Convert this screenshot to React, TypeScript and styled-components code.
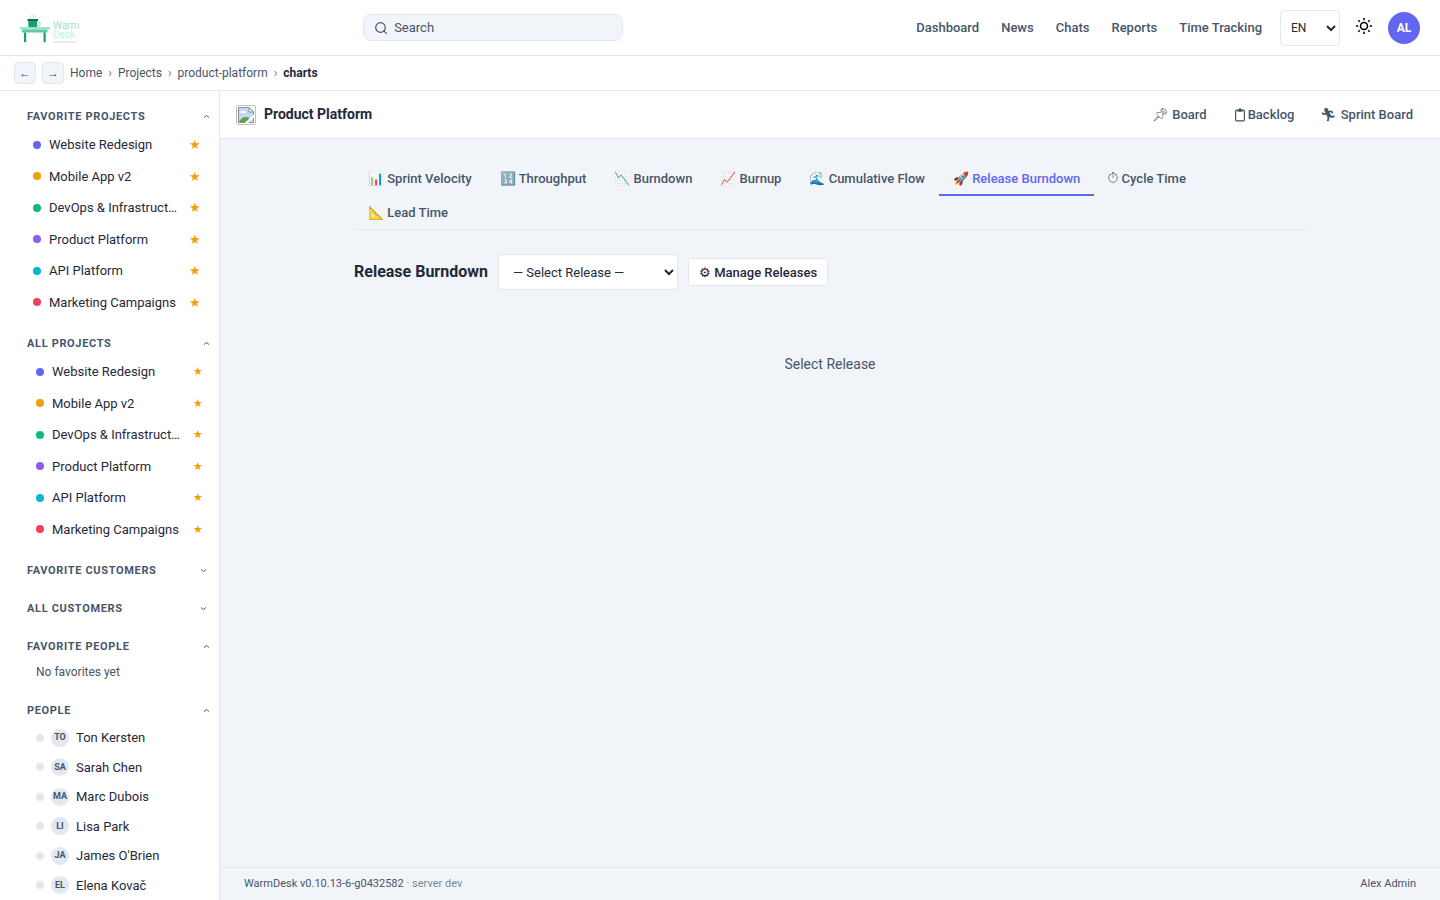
import React from 'react';
import styled, { createGlobalStyle } from 'styled-components';

const c = {
  bg: '#f1f5f9',
  surface: '#ffffff',
  border: '#e2e8f0',
  text: '#1e293b',
  muted: '#475569',
  primary: '#6366f1',
  star: '#f59e0b',
};

const Global = createGlobalStyle`
  *, *::before, *::after { box-sizing: border-box; }
  body {
    margin: 0;
    font-family: Roboto, 'Liberation Sans', sans-serif;
    font-size: 14px;
    line-height: 1.5;
    color: ${c.text};
    background: ${c.bg};
  }
  button, select, input { font-family: inherit; }
  a { color: inherit; text-decoration: none; }
  ul { list-style: none; margin: 0; padding: 0; }
`;

const Page = styled.div`
  display: flex;
  flex-direction: column;
  height: 100vh;
`;

const TopBar = styled.header`
  display: flex;
  align-items: center;
  flex: none;
  height: 56px;
  padding: 0 20px;
  background: ${c.surface};
  border-bottom: 1px solid ${c.border};
`;

const LogoLink = styled.a`
  display: flex;
  width: 60px;
  height: 32px;
`;

const SearchArea = styled.div`
  flex: 1;
  display: flex;
  justify-content: center;
  padding-right: 10px;
`;

const SearchBox = styled.label`
  display: flex;
  align-items: center;
  gap: 7px;
  width: 260px;
  height: 27px;
  padding: 0 11px;
  color: ${c.muted};
  background: ${c.bg};
  border: 1px solid ${c.border};
  border-radius: 8px;
`;

const SearchInput = styled.input`
  flex: 1;
  min-width: 0;
  padding: 0;
  border: 0;
  outline: 0;
  background: transparent;
  color: ${c.text};
  font-size: 13px;
  &::placeholder { color: ${c.muted}; opacity: 1; }
`;

const TopNav = styled.nav`
  display: flex;
  gap: 22px;
  margin-right: 18px;
  font-size: 13px;
  font-weight: 500;
  color: ${c.muted};
`;

const Select = styled.select<{ $width: number; $size: number }>`
  width: ${p => p.$width}px;
  height: 36px;
  padding: 0 0 0 ${p => (p.$size === 12 ? 6 : 10)}px;
  font-size: ${p => p.$size}px;
  color: ${c.text};
  background: ${c.surface};
  border: 1px solid ${c.border};
  border-radius: 4px;
`;

const ThemeButton = styled.button`
  display: flex;
  margin: 0 16px;
  padding: 0 0 4px;
  border: 0;
  background: none;
  color: #000;
`;

const UserBadge = styled.button`
  width: 32px;
  height: 32px;
  padding: 0;
  border: 0;
  border-radius: 50%;
  background: ${c.primary};
  color: #fff;
  font-size: 12px;
  font-weight: 700;
`;

const CrumbBar = styled.nav`
  display: flex;
  align-items: center;
  flex: none;
  gap: 6px;
  height: 35px;
  padding: 0 14px;
  background: ${c.surface};
  border-bottom: 1px solid ${c.border};
  font-size: 12px;
  color: ${c.muted};
`;

const HistoryButton = styled.button`
  width: 22px;
  height: 22px;
  padding: 0;
  border: 1px solid ${c.border};
  border-radius: 4px;
  background: ${c.bg};
  color: ${c.muted};
  font-size: 12px;
  line-height: 20px;
`;

const Separator = styled.span`
  opacity: 0.8;
`;

const Current = styled.span`
  font-weight: 700;
  color: ${c.text};
`;

const Body = styled.div`
  display: flex;
  flex: 1;
  min-height: 0;
`;

const Sidebar = styled.aside`
  flex: none;
  width: 220px;
  padding-top: 16px;
  overflow: hidden;
  background: ${c.surface};
  border-right: 1px solid ${c.border};
`;

const Section = styled.section<{ $gap: number }>`
  margin-bottom: ${p => p.$gap}px;
`;

const SectionToggle = styled.button<{ $open: boolean }>`
  display: flex;
  justify-content: space-between;
  align-items: center;
  width: 100%;
  height: 18px;
  padding: 0 ${p => (p.$open ? 9 : 12)}px 0 27px;
  border: 0;
  background: none;
  color: ${c.muted};
  font-size: 11px;
  font-weight: 700;
  letter-spacing: 0.06em;
  text-transform: uppercase;
`;

const List = styled.ul`
  padding-top: 4px;
`;

const ProjectLink = styled.a<{ $inset: boolean }>`
  display: flex;
  align-items: center;
  gap: 8px;
  padding: 6px ${p => (p.$inset ? 16 : 18)}px 6px ${p => (p.$inset ? 36 : 33)}px;
  font-size: 13px;
`;

const Dot = styled.span<{ $color: string }>`
  flex: none;
  width: 8px;
  height: 8px;
  border-radius: 50%;
  background: ${p => p.$color};
`;

const ItemName = styled.span`
  flex: 1;
  overflow: hidden;
  white-space: nowrap;
  text-overflow: ellipsis;
`;

const Star = styled.span<{ $small: boolean }>`
  flex: none;
  padding-left: 4px;
  font-size: ${p => (p.$small ? 11 : 13)}px;
  line-height: 1;
  color: ${c.star};
`;

const EmptyNote = styled.p`
  margin: 0;
  padding: 8px 36px 0;
  font-size: 12px;
  color: ${c.muted};
`;

const PersonLink = styled.a`
  display: flex;
  align-items: center;
  gap: 7px;
  padding: 5px 16px 5px 36px;
  font-size: 13px;
`;

const Initials = styled.span`
  display: flex;
  align-items: center;
  justify-content: center;
  flex: none;
  width: 18px;
  height: 18px;
  border-radius: 50%;
  background: ${c.border};
  color: ${c.muted};
  font-size: 9px;
  font-weight: 700;
`;

const Content = styled.div`
  display: flex;
  flex-direction: column;
  flex: 1;
  min-width: 0;
`;

const ProjectBar = styled.div`
  display: flex;
  align-items: center;
  flex: none;
  gap: 8px;
  height: 48px;
  padding: 0 16px;
  background: ${c.surface};
  border-bottom: 1px solid ${c.border};
`;

const ProjectTitle = styled.span`
  flex: 1;
  font-weight: 700;
`;

const ProjectNav = styled.nav`
  display: flex;
  gap: 4px;
`;

const ProjectNavLink = styled.a`
  display: flex;
  align-items: center;
  padding: 4px 11px;
  font-size: 13px;
  font-weight: 500;
  color: ${c.muted};
`;

const Main = styled.main`
  flex: 1;
  width: 100%;
  max-width: 1000px;
  margin: 0 auto;
  padding: 24px;
`;

const Tabs = styled.div`
  display: flex;
  flex-wrap: wrap;
  row-gap: 2px;
  margin-bottom: 24px;
  border-bottom: 1px solid ${c.border};
`;

const Tab = styled.button<{ $active: boolean }>`
  padding: 8px 14px;
  border: 0;
  border-bottom: 2px solid ${p => (p.$active ? c.primary : 'transparent')};
  margin-bottom: -1px;
  background: none;
  color: ${p => (p.$active ? c.primary : c.muted)};
  font-size: 13px;
  font-weight: 500;
`;

const ChartHead = styled.div`
  display: flex;
  align-items: center;
  gap: 10px;
`;

const ChartTitle = styled.h2`
  margin: 0;
  font-size: 16px;
  font-weight: 700;
`;

const ManageButton = styled.button`
  height: 28px;
  padding: 0 10px;
  border: 1px solid ${c.border};
  border-radius: 4px;
  background: ${c.surface};
  color: ${c.text};
  font-size: 13px;
  font-weight: 500;
`;

const EmptyState = styled.p`
  margin: 0;
  padding: 64px 0;
  text-align: center;
  color: ${c.muted};
`;

const Footer = styled.footer`
  display: flex;
  justify-content: space-between;
  align-items: center;
  flex: none;
  height: 33px;
  padding: 0 24px;
  border-top: 1px solid ${c.border};
  font-size: 11px;
  color: ${c.muted};
`;

const Faded = styled.span`
  opacity: 0.7;
`;

const LogoText = styled.text`
  font-family: Roboto, sans-serif;
  font-size: 10px;
`;

function Logo() {
  return (
    <svg width="60" height="32" viewBox="0 0 60 32" role="img" aria-label="WarmDesk">
      <path d="M10.500 6V3M13 6V2M15.500 6V3" stroke="#c5ebdd" strokeWidth="1" fill="none" />
      <path d="M17.500 10.500h1.200a1.500 1.500 0 0 1 0 3.200H17.500" stroke="#8fd9bf" strokeWidth="1" fill="none" />
      <rect x="8.300" y="8" width="8.800" height="7.500" fill="#1d9e75" />
      <rect x="7.500" y="7" width="10.500" height="2" fill="#0f6e56" />
      <rect x="0" y="15" width="30" height="2.500" fill="#9fe1cb" />
      <rect x="2" y="17.500" width="25.500" height="3" fill="#5dcaa5" />
      <rect x="4" y="20.500" width="2.200" height="9.700" fill="#1d9e75" />
      <rect x="23.500" y="20.500" width="2.200" height="9.700" fill="#1d9e75" />
      <LogoText x="33" y="17" fill="#9fe1cb">Warm</LogoText>
      <LogoText x="33" y="26" fill="#b5fccf">Desk</LogoText>
      <path d="M33 30h24" stroke="#dedad6" strokeWidth="1" />
    </svg>
  );
}

function SearchIcon() {
  return (
    <svg width="12" height="12" viewBox="0 0 12 12" fill="none" stroke="currentColor" strokeWidth="1.200" strokeLinecap="round" aria-hidden="true">
      <circle cx="5.500" cy="5.500" r="4.800" />
      <path d="M9 9l2.300 2.300" />
    </svg>
  );
}

function SunIcon() {
  return (
    <svg width="16" height="16" viewBox="0 0 16 16" fill="none" stroke="currentColor" strokeWidth="1.500" aria-hidden="true">
      <circle cx="8" cy="8" r="3.500" />
      <path d="M8 0v2.200M8 13.800V16M0 8h2.200M13.800 8H16M2.300 2.300l1.500 1.500M12.200 12.200l1.500 1.500M2.300 13.700l1.500-1.500M12.200 3.800l1.500-1.500" />
    </svg>
  );
}

function ClipboardIcon() {
  return (
    <svg width="15" height="14" viewBox="0 0 15 14" fill="none" stroke="currentColor" strokeWidth="1.200" aria-hidden="true">
      <rect x="2.600" y="2.100" width="8.800" height="10.800" rx="1.200" />
      <path d="M4.500 1.500H5.800a1.200 1.200 0 0 1 2.400 0H9.500V3.800H4.500Z" fill="currentColor" stroke="none" />
    </svg>
  );
}

function StopwatchIcon() {
  return (
    <svg width="10" height="11" viewBox="0 0 10 11" fill="none" stroke="currentColor" strokeWidth="0.700" aria-hidden="true">
      <circle cx="5" cy="6" r="4.300" />
      <path d="M5 6V3.200M4 0.500h2M5 0.500v1.200M1 1.800l1 1M9 1.800l-1 1" />
    </svg>
  );
}

function Chevron({ open }: { open: boolean }) {
  return (
    <svg width="7" height="5" viewBox="0 0 7 5" fill="none" stroke="currentColor" strokeWidth="1" aria-hidden="true">
      <path d={open ? 'M1 3.500L3.500 1.500L6 3.500' : 'M1 1.500L3.500 3.500L6 1.500'} />
    </svg>
  );
}

function MissingImage() {
  return (
    <svg width="20" height="20" viewBox="0 0 20 20" role="img" aria-label="Project logo">
      <rect x="0.500" y="0.500" width="19" height="19" rx="1.500" fill="#fff" stroke="#c0c0c0" />
      <path d="M2.500 2.500H13L17.500 7V17.500H2.500Z" fill="#c3d5f8" stroke="#8f8f8f" />
      <path d="M4.500 8a1.800 1.800 0 0 1 2.500-2a2 2 0 0 1 3 2Z" fill="#fff" />
      <path d="M3 17C5 12.500 10 10.500 13.500 13V17Z" fill="#57a83b" />
      <path d="M7.500 19L19 8.500V11.500L11 19Z" fill="#fff" />
      <path d="M13 2.500V7H17.500Z" fill="#fff" stroke="#8f8f8f" />
    </svg>
  );
}

const projects = [
  { name: 'Website Redesign', color: '#6366f1' },
  { name: 'Mobile App v2', color: '#f59e0b' },
  { name: 'DevOps & Infrastructure', color: '#10b981' },
  { name: 'Product Platform', color: '#8b5cf6' },
  { name: 'API Platform', color: '#06b6d4' },
  { name: 'Marketing Campaigns', color: '#f43f5e' },
];

const people = ['Ton Kersten', 'Sarah Chen', 'Marc Dubois', 'Lisa Park', "James O'Brien", 'Elena Kovač'];

const tabs: { icon: React.ReactNode; label: string }[] = [
  { icon: '📊', label: 'Sprint Velocity' },
  { icon: '🔢', label: 'Throughput' },
  { icon: '📉', label: 'Burndown' },
  { icon: '📈', label: 'Burnup' },
  { icon: '🌊', label: 'Cumulative Flow' },
  { icon: '🚀', label: 'Release Burndown' },
  { icon: <StopwatchIcon />, label: 'Cycle Time' },
  { icon: '📐', label: 'Lead Time' },
];

interface SectionProps {
  title: string;
  open: boolean;
  gap?: number;
  children?: React.ReactNode;
}

function SidebarSection({ title, open, gap = 20, children }: SectionProps) {
  return (
    <Section $gap={gap}>
      <SectionToggle $open={open} aria-expanded={open}>
        {title}
        <Chevron open={open} />
      </SectionToggle>
      {children}
    </Section>
  );
}

function ProjectList({ inset }: { inset: boolean }) {
  return (
    <List>
      {projects.map(p => (
        <li key={p.name}>
          <ProjectLink href="#" $inset={inset}>
            <Dot $color={p.color} />
            <ItemName>{p.name}</ItemName>
            <Star $small={inset}>★</Star>
          </ProjectLink>
        </li>
      ))}
    </List>
  );
}

export default function App() {
  return (
    <Page>
      <Global />
      <TopBar>
        <LogoLink href="#"><Logo /></LogoLink>
        <SearchArea>
          <SearchBox>
            <SearchIcon />
            <SearchInput type="text" placeholder="Search" aria-label="Search" />
          </SearchBox>
        </SearchArea>
        <TopNav>
          <a href="#">Dashboard</a>
          <a href="#">News</a>
          <a href="#">Chats</a>
          <a href="#">Reports</a>
          <a href="#">Time Tracking</a>
        </TopNav>
        <Select $width={60} $size={12} aria-label="Language">
          <option>EN</option>
        </Select>
        <ThemeButton aria-label="Toggle theme"><SunIcon /></ThemeButton>
        <UserBadge>AL</UserBadge>
      </TopBar>
      <CrumbBar aria-label="Breadcrumb">
        <HistoryButton aria-label="Back">←</HistoryButton>
        <HistoryButton aria-label="Forward">→</HistoryButton>
        <a href="#">Home</a>
        <Separator>›</Separator>
        <a href="#">Projects</a>
        <Separator>›</Separator>
        <a href="#">product-platform</a>
        <Separator>›</Separator>
        <Current>charts</Current>
      </CrumbBar>
      <Body>
        <Sidebar>
          <SidebarSection title="Favorite Projects" open gap={16}>
            <ProjectList inset={false} />
          </SidebarSection>
          <SidebarSection title="All Projects" open gap={16}>
            <ProjectList inset />
          </SidebarSection>
          <SidebarSection title="Favorite Customers" open={false} />
          <SidebarSection title="All Customers" open={false} />
          <SidebarSection title="Favorite People" open>
            <EmptyNote>No favorites yet</EmptyNote>
          </SidebarSection>
          <SidebarSection title="People" open>
            <List>
              {people.map(name => (
                <li key={name}>
                  <PersonLink href="#">
                    <Dot $color={c.border} />
                    <Initials>{name.slice(0, 2).toUpperCase()}</Initials>
                    <ItemName>{name}</ItemName>
                  </PersonLink>
                </li>
              ))}
            </List>
          </SidebarSection>
        </Sidebar>
        <Content>
          <ProjectBar>
            <MissingImage />
            <ProjectTitle>Product Platform</ProjectTitle>
            <ProjectNav>
              <ProjectNavLink href="#">📌︎ Board</ProjectNavLink>
              <ProjectNavLink href="#"><ClipboardIcon />Backlog</ProjectNavLink>
              <ProjectNavLink href="#">🏃︎ Sprint Board</ProjectNavLink>
            </ProjectNav>
          </ProjectBar>
          <Main>
            <Tabs role="tablist">
              {tabs.map(({ icon, label }) => {
                const active = label === 'Release Burndown';
                return (
                  <Tab key={label} role="tab" aria-selected={active} $active={active}>{icon} {label}</Tab>
                );
              })}
            </Tabs>
            <ChartHead>
              <ChartTitle>Release Burndown</ChartTitle>
              <Select $width={180} $size={13} aria-label="Release">
                <option>— Select Release —</option>
              </Select>
              <ManageButton>⚙ Manage Releases</ManageButton>
            </ChartHead>
            <EmptyState>Select Release</EmptyState>
          </Main>
          <Footer>
            <span>WarmDesk v0.10.13-6-g0432582 <Faded>· server dev</Faded></span>
            <span>Alex Admin</span>
          </Footer>
        </Content>
      </Body>
    </Page>
  );
}
